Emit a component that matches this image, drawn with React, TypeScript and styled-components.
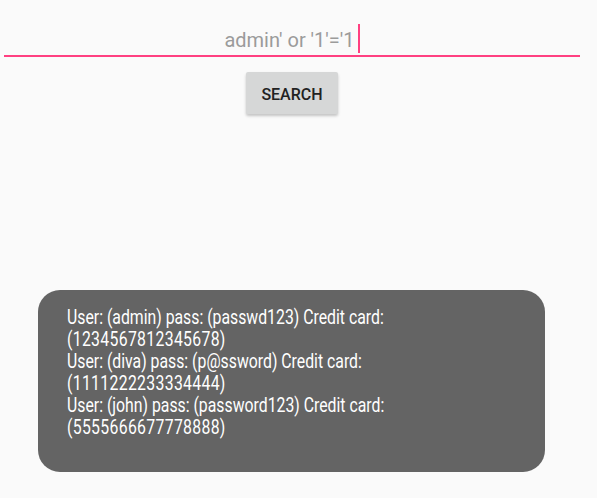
import styled, { createGlobalStyle } from "styled-components"

const GlobalStyle = createGlobalStyle`
  html, body {
    margin: 0;
    padding: 0;
    background: #fafafa;
    font-family: Roboto, "Noto Sans", sans-serif;
  }
`

const accent = "#ff4081"

const records = [
  { user: "admin", pass: "passwd123", card: "1234567812345678" },
  { user: "diva", pass: "p@ssword", card: "1111222233334444" },
  { user: "john", pass: "password123", card: "5555666677778888" },
]

export default function App() {
  return (
    <Screen>
      <GlobalStyle />
      <SearchField>
        <Query>admin' or '1'='1</Query>
        <Caret />
      </SearchField>
      <ButtonRow>
        <SearchButton>SEARCH</SearchButton>
      </ButtonRow>
      <Toast>
        <ToastText>
          {records.map((r) => (
            <Record key={r.user}>
              <Line>{`User: (${r.user}) pass: (${r.pass}) Credit card:`}</Line>
              <Line $digits>{`(${r.card})`}</Line>
            </Record>
          ))}
        </ToastText>
      </Toast>
    </Screen>
  )
}

const Screen = styled.div`
  width: 597px;
  height: 498px;
  display: flex;
  flex-direction: column;
  background: #fafafa;
`

const SearchField = styled.div`
  margin: 24px 17px 0 4px;
  height: 31px;
  border-bottom: 2px solid ${accent};
  display: flex;
  justify-content: center;
  align-items: flex-start;
`

const Query = styled.span`
  font-size: 20px;
  line-height: 29px;
  padding-top: 2px;
  color: #9b9b9b;
`

const Caret = styled.span`
  width: 2px;
  height: 29px;
  margin-left: 3px;
  background: ${accent};
`

const ButtonRow = styled.div`
  display: flex;
  justify-content: center;
  margin-top: 15px;
  padding-right: 13px;
`

const SearchButton = styled.button`
  width: 92px;
  height: 42px;
  border: none;
  border-radius: 2px;
  background: #d6d7d7;
  color: #222222;
  font-family: Roboto, sans-serif;
  font-weight: 500;
  font-size: 16px;
  letter-spacing: 0;
  box-shadow: 0 2px 3px rgba(0, 0, 0, 0.22);
  padding: 2px 0 0;
`

const Toast = styled.div`
  margin: 176px 0 0 38px;
  width: 507px;
  height: 182px;
  box-sizing: border-box;
  border-radius: 22px;
  background: #646464;
  padding: 16px 0 0 29px;
  overflow: hidden;
`

const ToastText = styled.div`
  transform: scaleX(0.79);
  transform-origin: left top;
  color: #ffffff;
  font-size: 20px;
  line-height: 22px;
`

const Record = styled.div`
  display: flex;
  flex-direction: column;
`

const Line = styled.div<{ $digits?: boolean }>`
  white-space: nowrap;
  letter-spacing: ${(p) => (p.$digits ? "0.4px" : "0")};
`
